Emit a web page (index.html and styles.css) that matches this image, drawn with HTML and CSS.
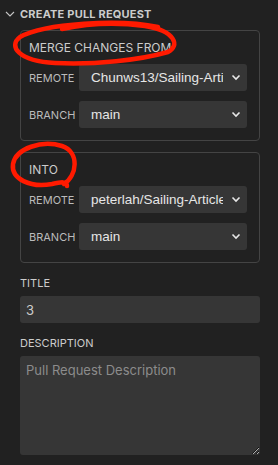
FILE: index.html
```html
<!DOCTYPE html>
<html lang="en">
<head>
    <meta charset="UTF-8">
    <meta name="viewport" content="width=device-width, initial-scale=1.0">
    <title>Create Pull Request</title>
    <link rel="stylesheet" href="styles.css">
</head>
<body>
    <div class="view-header">
        <svg class="twistie" width="10" height="10" viewBox="0 0 10 10"><path d="M1 3 L5 7 L9 3" fill="none" stroke="#c5c5c5" stroke-width="1.1"/></svg>
        <span>CREATE PULL REQUEST</span>
    </div>

    <div class="form">
        <!-- where the changes come from -->
        <div class="group">
            <div class="group-title">MERGE CHANGES FROM</div>
            <div class="field-row">
                <label>REMOTE</label>
                <div class="select-wrap">
                    <select><option>Chunws13/Sailing-Article</option></select>
                    <svg class="caret" width="12" height="12" viewBox="0 0 12 12"><path d="M2.5 4.5 L6 8 L9.5 4.5" fill="none" stroke="#e8e8e8" stroke-width="1.6"/></svg>
                </div>
            </div>
            <div class="field-row">
                <label>BRANCH</label>
                <div class="select-wrap">
                    <select><option>main</option></select>
                    <svg class="caret" width="12" height="12" viewBox="0 0 12 12"><path d="M2.5 4.5 L6 8 L9.5 4.5" fill="none" stroke="#e8e8e8" stroke-width="1.6"/></svg>
                </div>
            </div>
        </div>

        <!-- target repository -->
        <div class="group">
            <div class="group-title">INTO</div>
            <div class="field-row">
                <label>REMOTE</label>
                <div class="select-wrap">
                    <select><option>peterlah/Sailing-Article</option></select>
                    <svg class="caret" width="12" height="12" viewBox="0 0 12 12"><path d="M2.5 4.5 L6 8 L9.5 4.5" fill="none" stroke="#e8e8e8" stroke-width="1.6"/></svg>
                </div>
            </div>
            <div class="field-row">
                <label>BRANCH</label>
                <div class="select-wrap">
                    <select><option>main</option></select>
                    <svg class="caret" width="12" height="12" viewBox="0 0 12 12"><path d="M2.5 4.5 L6 8 L9.5 4.5" fill="none" stroke="#e8e8e8" stroke-width="1.6"/></svg>
                </div>
            </div>
        </div>

        <div class="field">
            <label>TITLE</label>
            <input type="text" value="3">
        </div>
        <div class="field">
            <label>DESCRIPTION</label>
            <textarea placeholder="Pull Request Description"></textarea>
        </div>
    </div>

    <!-- hand drawn marks on top of the screenshot -->
    <svg class="marks" width="278" height="465" viewBox="0 0 278 465">
        <path d="M158 27 C120 19, 45 23, 20 37 C8 46, 18 61, 55 63 C95 65, 140 60, 168 52 C180 46, 176 31, 145 26 C115 22, 85 24, 62 29" />
        <path d="M62 146 C42 140, 16 148, 13 164 C11 179, 30 188, 52 184 C61 182, 67 181, 67 186 M64 184 C77 176, 80 152, 62 146" />
    </svg>
</body>
</html>
```

FILE: styles.css
```css
/* Base */
body {
    margin: 0;
    padding: 0;
    background-color: #212121;
    color: #cccccc;
    font-family: Inter, "Noto Sans", sans-serif;
    width: 278px;
    height: 465px;
    overflow: hidden;
    position: relative;
}

.view-header {
    display: flex;
    align-items: center;
    height: 28px;
    padding-left: 5px;
    font-size: 11px;
    font-weight: 700;
    color: #cccccc;
    letter-spacing: 0.2px;
}
.twistie {
    margin-right: 5px;
}

.form {
    padding: 2px 18px 0 20px;
}

/* Grouped fields */
.group {
    border: 1px solid #444444;
    border-radius: 4px;
    padding: 9px 12px 12px 8px;
    margin-bottom: 11px;
}
.group-title {
    font-size: 12px;
    line-height: 16px;
    color: #cccccc;
    margin-bottom: 8px;
}
.field-row {
    display: flex;
    align-items: center;
    margin-top: 10px;
}
.group-title + .field-row {
    margin-top: 0;
}
.field-row label {
    width: 50px;
    font-size: 11px;
    color: #bbbbbb;
}

.select-wrap {
    position: relative;
    flex: 1;
}
select {
    appearance: none;
    -webkit-appearance: none;
    width: 100%;
    height: 27px;
    border: none;
    border-radius: 3px;
    background-color: #363636;
    color: #e6e6e6;
    font-family: "Liberation Sans", Arial, sans-serif;
    font-size: 13.5px;
    padding: 0 24px 0 12px;
    outline: none;
}
.caret {
    position: absolute;
    right: 5px;
    top: 7px;
    pointer-events: none;
}

/* Plain fields */
.field {
    margin-top: 13px;
}
.field label {
    display: block;
    font-size: 11px;
    color: #cccccc;
    margin-bottom: 6px;
}
input[type="text"], textarea {
    box-sizing: border-box;
    width: 240px;
    border: none;
    border-radius: 3px;
    background-color: #363636;
    color: #cccccc;
    font-family: Inter, "Noto Sans", sans-serif;
    font-size: 13px;
    outline: none;
}
input[type="text"] {
    height: 27px;
    padding: 0 6px;
}
textarea {
    height: 99px;
    padding: 6px 6px;
    resize: vertical;
}
textarea::placeholder {
    color: #8c8c8c;
}

/* Annotation overlay */
.marks {
    position: absolute;
    top: 0;
    left: 0;
    pointer-events: none;
}
.marks path {
    fill: none;
    stroke: #ff1a00;
    stroke-width: 4.5;
    stroke-linecap: round;
    stroke-linejoin: round;
}
```
